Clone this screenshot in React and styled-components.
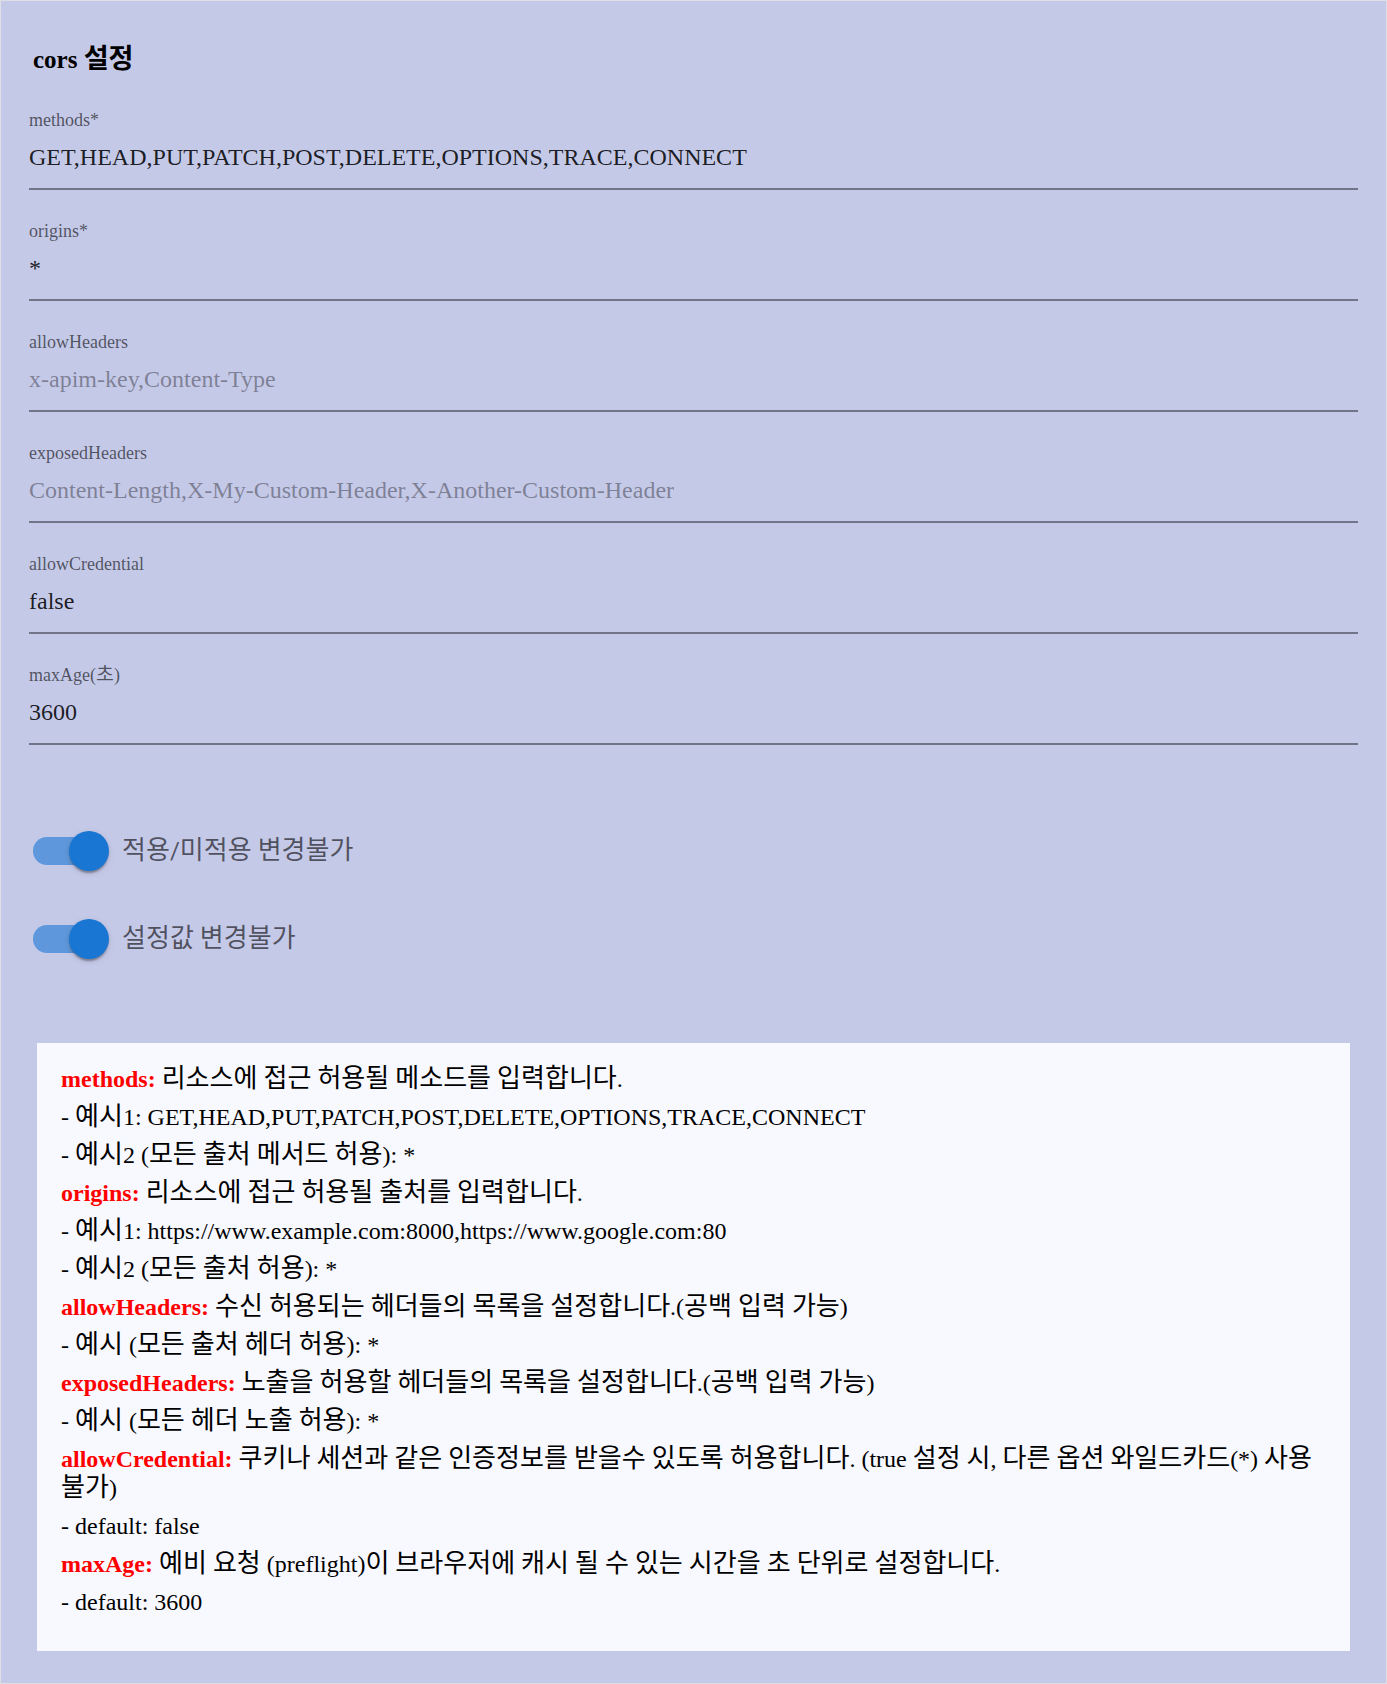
import React from "react";
import styled, { createGlobalStyle } from "styled-components";

const GlobalStyle = createGlobalStyle`
  body {
    margin: 0;
    background: #ffffff;
    font-family: "Liberation Serif", "Noto Sans CJK KR", serif;
  }
`;

const colors = {
  page: "#c5c9e8",
  pageBorder: "#dedfe6",
  panel: "#f8f9ff",
  primary: "#1976d2",
  red: "#ff0000",
};

// hangul in the reference renders a bit wider than Noto CJK at the same size
const Hangul = styled.span`
  font-size: 1.085em;
  line-height: 0;
`;

const ko = (text) =>
  text
    .split(/([\u3131-\u318e\uac00-\ud7a3]+)/)
    .map((part, i) => (i % 2 ? <Hangul key={i}>{part}</Hangul> : part));

const Page = styled.div`
  box-sizing: border-box;
  width: 1387px;
  min-height: 1684px;
  border: 1px solid ${colors.pageBorder};
  background-color: ${colors.page};
  padding: 43px 28px 32px;
`;

const Title = styled.h2`
  margin: 0 0 32px;
  padding-left: 4px;
  font-size: 25px;
  line-height: 32px;
  font-weight: bold;
  color: #000;
`;

const FieldGroup = styled.div`
  margin-bottom: 29px;
`;

const Label = styled.label`
  display: block;
  font-size: 18px;
  line-height: 24px;
  color: rgba(0, 0, 0, 0.6);
`;

const Input = styled.input`
  display: block;
  box-sizing: content-box;
  width: 100%;
  height: 32px;
  margin: 0;
  padding: 9px 0 15px;
  border: none;
  border-bottom: 2px solid rgba(0, 0, 0, 0.42);
  background: transparent;
  outline: none;
  font-family: "Liberation Serif", "Noto Sans CJK KR", serif;
  font-size: 24px;
  line-height: 32px;
  color: rgba(0, 0, 0, 0.87);

  &::placeholder {
    color: rgba(0, 0, 0, 0.87);
    opacity: 0.42;
  }
`;

const SwitchList = styled.div`
  display: flex;
  flex-direction: column;
  gap: 48px;
  margin-top: 86px;
`;

const SwitchRow = styled.label`
  display: flex;
  align-items: center;
  height: 40px;
`;

const SwitchBox = styled.span`
  position: relative;
  flex: none;
  width: 76px;
  height: 40px;
  margin-left: 4px;
`;

const Track = styled.span`
  position: absolute;
  left: 0;
  top: 6px;
  width: 68px;
  height: 28px;
  border-radius: 14px;
  background-color: ${(p) => (p.$on ? "rgba(25, 118, 210, 0.6)" : "rgba(0, 0, 0, 0.38)")};
`;

const Thumb = styled.span`
  position: absolute;
  top: 0;
  left: ${(p) => (p.$on ? "36px" : "-4px")};
  width: 40px;
  height: 40px;
  border-radius: 50%;
  background-color: ${(p) => (p.$on ? colors.primary : "#fafafa")};
  box-shadow: 0 4px 2px -2px rgba(0, 0, 0, 0.2), 0 2px 2px 0 rgba(0, 0, 0, 0.14),
    0 2px 6px 0 rgba(0, 0, 0, 0.12);
`;

const SwitchText = styled.span`
  margin-left: 13px;
  font-family: Roboto, "Noto Sans CJK KR", sans-serif;
  font-size: 24px;
  line-height: 32px;
  color: rgba(0, 0, 0, 0.6);
`;

const HelpBox = styled.div`
  margin: 84px 8px 0;
  padding: 22px 24px 25px;
  background-color: ${colors.panel};
  color: #000;
`;

const HelpLine = styled.p`
  margin: 0 0 9px;
  font-size: 24px;
  line-height: 29px;
`;

const Key = styled.b`
  color: ${colors.red};
`;

const fields = [
  { label: "methods*", value: "GET,HEAD,PUT,PATCH,POST,DELETE,OPTIONS,TRACE,CONNECT" },
  { label: "origins*", value: "*" },
  { label: "allowHeaders", placeholder: "x-apim-key,Content-Type" },
  {
    label: "exposedHeaders",
    placeholder: "Content-Length,X-My-Custom-Header,X-Another-Custom-Header",
  },
  { label: "allowCredential", value: "false" },
  { label: "maxAge(초)", value: "3600" },
];

const switches = ["적용/미적용 변경불가", "설정값 변경불가"];

const help = [
  { key: "methods:", text: "리소스에 접근 허용될 메소드를 입력합니다." },
  { text: "- 예시1: GET,HEAD,PUT,PATCH,POST,DELETE,OPTIONS,TRACE,CONNECT" },
  { text: "- 예시2 (모든 출처 메서드 허용): *" },
  { key: "origins:", text: "리소스에 접근 허용될 출처를 입력합니다." },
  { text: "- 예시1: https://www.example.com:8000,https://www.google.com:80" },
  { text: "- 예시2 (모든 출처 허용): *" },
  { key: "allowHeaders:", text: "수신 허용되는 헤더들의 목록을 설정합니다.(공백 입력 가능)" },
  { text: "- 예시 (모든 출처 헤더 허용): *" },
  { key: "exposedHeaders:", text: "노출을 허용할 헤더들의 목록을 설정합니다.(공백 입력 가능)" },
  { text: "- 예시 (모든 헤더 노출 허용): *" },
  {
    key: "allowCredential:",
    text: "쿠키나 세션과 같은 인증정보를 받을수 있도록 허용합니다. (true 설정 시, 다른 옵션 와일드카드(*) 사용 불가)",
  },
  { text: "- default: false" },
  {
    key: "maxAge:",
    text: "예비 요청 (preflight)이 브라우저에 캐시 될 수 있는 시간을 초 단위로 설정합니다.",
  },
  { text: "- default: 3600" },
];

function Switch({ on }) {
  return (
    <SwitchBox>
      <Track $on={on} />
      <Thumb $on={on} />
    </SwitchBox>
  );
}

function App() {
  return (
    <>
      <GlobalStyle />
      <Page>
        <Title>{ko("cors 설정")}</Title>

        {fields.map((f) => (
          <FieldGroup key={f.label}>
            <Label>{ko(f.label)}</Label>
            <Input defaultValue={f.value} placeholder={f.placeholder} readOnly />
          </FieldGroup>
        ))}

        <SwitchList>
          {switches.map((s) => (
            <SwitchRow key={s}>
              <Switch on />
              <SwitchText>{ko(s)}</SwitchText>
            </SwitchRow>
          ))}
        </SwitchList>

        <HelpBox>
          {help.map((h, i) => (
            <HelpLine key={i}>
              {h.key && <Key>{h.key}</Key>}
              {h.key && " "}
              {ko(h.text)}
            </HelpLine>
          ))}
        </HelpBox>
      </Page>
    </>
  );
}

export default App;
